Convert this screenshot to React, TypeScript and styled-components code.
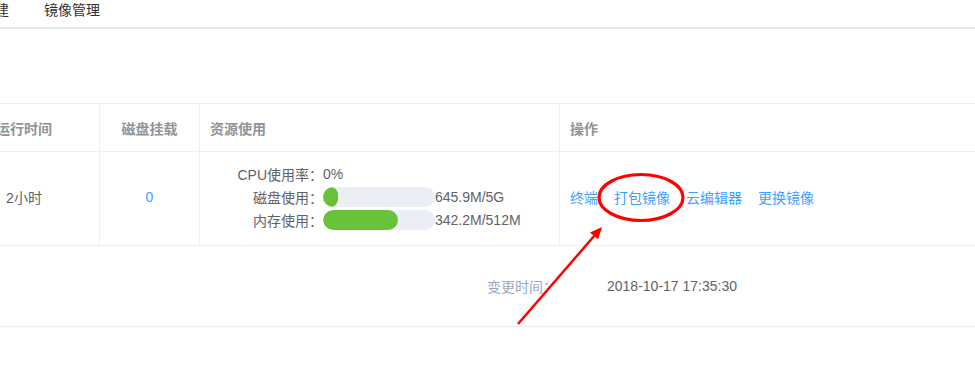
import React from "react";
import styled, { createGlobalStyle } from "styled-components";

const GlobalStyle = createGlobalStyle`
	html, body {
		margin: 0;
		padding: 0;
		background: #fff;
		overflow: hidden;
	}
	body {
		font-family: "Liberation Sans", "Noto Sans CJK SC", sans-serif;
		font-size: 14px;
		color: #606266;
	}
`;

// the page is scrolled sideways a little, so everything starts left of the view
const Page = styled.div`
	position: relative;
	width: 1026px;
	margin-left: -51px;
	height: 379px;
`;

const Nav = styled.nav`
	display: flex;
	gap: 35px;
	height: 27px;
	padding-left: 4px;
	border-bottom: 2px solid #e4e7ed;
`;

const NavItem = styled.a`
	line-height: 20px;
	color: #303133;
	text-decoration: none;
`;

const Table = styled.div`
	margin-top: 74px;
	display: grid;
	grid-template-columns: 151px 100px 360px 1fr;
	border-top: 1px solid #ebeef5;
`;

const Cell = styled.div<{ $head?: boolean; $center?: boolean; $last?: boolean }>`
	box-sizing: border-box;
	height: ${(p) => (p.$head ? "48px" : "94px")};
	display: flex;
	align-items: center;
	justify-content: ${(p) => (p.$center ? "center" : "flex-start")};
	padding: ${(p) => (p.$head ? "0 10px" : "0 10px 3px")};
	border-bottom: 1px solid #ebeef5;
	border-right: ${(p) => (p.$last ? "none" : "1px solid #ebeef5")};
	color: ${(p) => (p.$head ? "#909399" : "#606266")};
	font-weight: ${(p) => (p.$head ? 700 : 400)};
`;

const Usage = styled.div`
	display: grid;
	grid-template-columns: 123px auto;
	grid-auto-rows: 23px;
	align-items: center;
	margin-left: -10px;
	white-space: nowrap;
`;

const UsageLabel = styled.span`
	text-align: right;
`;

const UsageValue = styled.span`
	display: flex;
	align-items: center;
`;

const Track = styled.div`
	width: 112px;
	height: 20px;
	border-radius: 10px;
	background: #ebeef5;
	overflow: hidden;
`;

const Fill = styled.div`
	height: 100%;
	border-radius: 10px;
	background: #67c23a;
`;

const LinkText = styled.a`
	color: #409eff;
	text-decoration: none;
	margin-right: 16px;
	white-space: nowrap;
`;

const InfoRow = styled.div`
	display: flex;
	align-items: center;
	height: 80px;
	border-bottom: 1px solid #ebeef5;
`;

const InfoLabel = styled.span`
	width: 608px;
	text-align: right;
	color: #99a9bf;
`;

const InfoValue = styled.span`
	margin-left: 50px;
	color: #606266;
`;

const Annotation = styled.svg`
	position: absolute;
	left: 51px;
	top: 0;
	pointer-events: none;
`;

const bars = [
	{ label: "磁盘使用：", used: 645.9, total: 5120, text: "645.9M/5G" },
	{ label: "内存使用：", used: 342.2, total: 512, text: "342.2M/512M" },
];

const actions = ["终端", "打包镜像", "云编辑器", "更换镜像"];

export default function App() {
	return (
		<>
			<GlobalStyle />
			<Page>
				<Nav>
					<NavItem>镜像创建</NavItem>
					<NavItem>镜像管理</NavItem>
				</Nav>
				<Table>
					<Cell $head $center>运行时间</Cell>
					<Cell $head $center>磁盘挂载</Cell>
					<Cell $head>资源使用</Cell>
					<Cell $head $last>操作</Cell>

					<Cell $center>2小时</Cell>
					<Cell $center>
						<LinkText style={{ marginRight: 0 }}>0</LinkText>
					</Cell>
					<Cell>
						<Usage>
							<UsageLabel>CPU使用率：</UsageLabel>
							<UsageValue>0%</UsageValue>
							{bars.map((b) => (
								<React.Fragment key={b.label}>
									<UsageLabel>{b.label}</UsageLabel>
									<UsageValue>
										<Track>
											<Fill style={{ width: `${Math.max((b.used / b.total) * 100, 13)}%` }} />
										</Track>
										{b.text}
									</UsageValue>
								</React.Fragment>
							))}
						</Usage>
					</Cell>
					<Cell $last>
						{actions.map((a) => (
							<LinkText key={a}>{a}</LinkText>
						))}
					</Cell>
				</Table>
				<InfoRow>
					<InfoLabel>变更时间：</InfoLabel>
					<InfoValue>2018-10-17 17:35:30</InfoValue>
				</InfoRow>
				<Annotation width="975" height="379" viewBox="0 0 975 379">
					<ellipse cx="641" cy="197.5" rx="42" ry="23" fill="none" stroke="#ff0000" strokeWidth="3.2" />
					<line x1="518" y1="324" x2="595" y2="235" stroke="#ff0000" strokeWidth="2.5" />
					<polygon points="602,227 598,239.5 590,232.5" fill="#ff0000" />
				</Annotation>
			</Page>
		</>
	);
}
